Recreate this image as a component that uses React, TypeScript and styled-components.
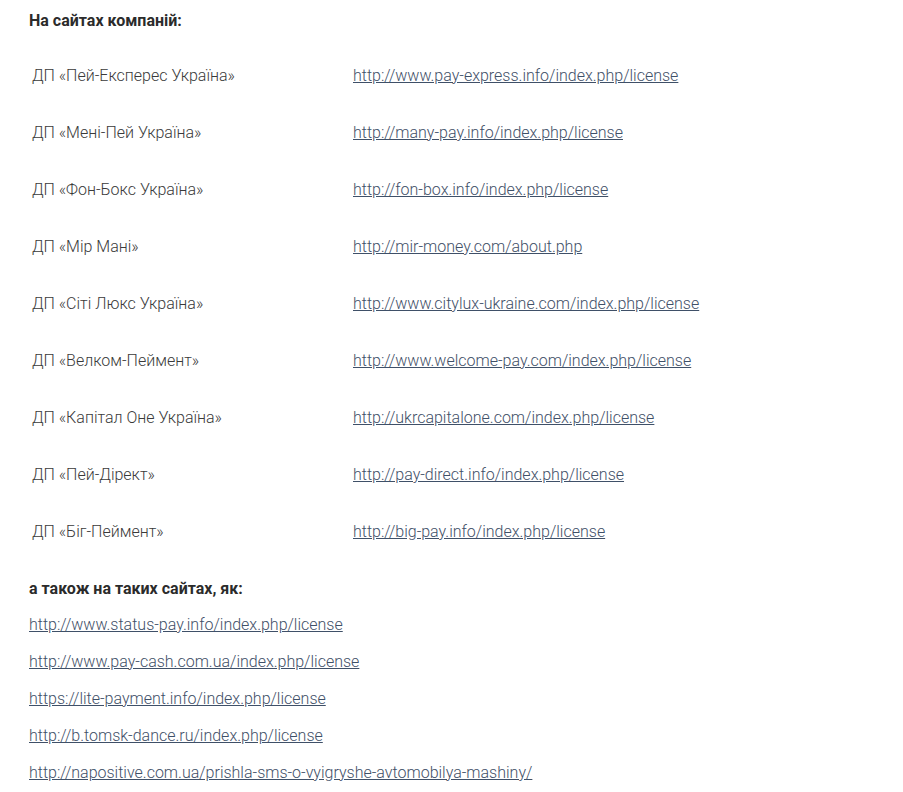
import React from "react";
import styled, { createGlobalStyle } from "styled-components";

const Global = createGlobalStyle`
  html, body { margin: 0; padding: 0; background: #fff; }
  body { font-family: Roboto, "Noto Sans", sans-serif; }
`;

const Page = styled.div`
  padding: 9px 29px 0 29px;
  font-family: Roboto, "Noto Sans", sans-serif;
  font-size: 16px;
  color: #3a3a3a;
  font-weight: 300;
`;

const Heading = styled.p`
  margin: 0;
  font-weight: 700;
  color: #2b2b2b;
  line-height: 24px;
`;

const Table = styled.table`
  border-collapse: collapse;
  margin: 14px 0 17px 0;
`;

const Row = styled.tr`
  height: 57px;
`;

const NameCell = styled.td`
  width: 321px;
  padding: 0 0 0 3px;
  vertical-align: middle;
`;

const LinkCell = styled.td`
  padding: 0;
  vertical-align: middle;
`;

const Link = styled.a`
  color: #3f5068;
  text-decoration: underline;
`;

const List = styled.div`
  display: flex;
  flex-direction: column;
  gap: 13px;
  margin-top: 12px;
`;

const ListItem = styled.p`
  margin: 0;
  line-height: 24px;
`;

const companies: [string, string][] = [
  ["ДП «Пей-Експерес Україна»", "http://www.pay-express.info/index.php/license"],
  ["ДП «Мені-Пей Україна»", "http://many-pay.info/index.php/license"],
  ["ДП «Фон-Бокс Україна»", "http://fon-box.info/index.php/license"],
  ["ДП «Мір Мані»", "http://mir-money.com/about.php"],
  ["ДП «Сіті Люкс Україна»", "http://www.citylux-ukraine.com/index.php/license"],
  ["ДП «Велком-Пеймент»", "http://www.welcome-pay.com/index.php/license"],
  ["ДП «Капітал Оне Україна»", "http://ukrcapitalone.com/index.php/license"],
  ["ДП «Пей-Дірект»", "http://pay-direct.info/index.php/license"],
  ["ДП «Біг-Пеймент»", "http://big-pay.info/index.php/license"],
];

const others = [
  "http://www.status-pay.info/index.php/license",
  "http://www.pay-cash.com.ua/index.php/license",
  "https://lite-payment.info/index.php/license",
  "http://b.tomsk-dance.ru/index.php/license",
  "http://napositive.com.ua/prishla-sms-o-vyigryshe-avtomobilya-mashiny/",
];

export default function App() {
  return (
    <>
      <Global />
      <Page>
        <Heading>На сайтах компаній:</Heading>
        <Table>
          <tbody>
            {companies.map(([name, url]) => (
              <Row key={url}>
                <NameCell>{name}</NameCell>
                <LinkCell>
                  <Link href={url}>{url}</Link>
                </LinkCell>
              </Row>
            ))}
          </tbody>
        </Table>
        <Heading>а також на таких сайтах, як:</Heading>
        <List>
          {others.map((u) => (
            <ListItem key={u}>
              <Link href={u}>{u}</Link>
            </ListItem>
          ))}
        </List>
      </Page>
    </>
  );
}
